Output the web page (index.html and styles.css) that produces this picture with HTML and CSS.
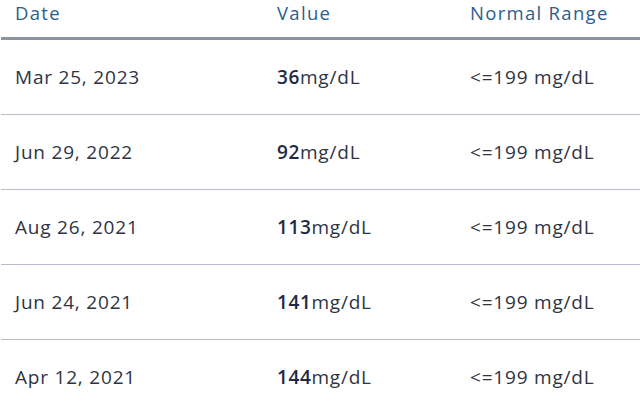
FILE: index.html
```html
<!DOCTYPE html>
<html>
<head>
<meta charset="utf-8">
<link rel="stylesheet" href="styles.css">
</head>
<body>
<div class="table">
  <div class="row head">
    <div class="cell">Date</div>
    <div class="cell">Value</div>
    <div class="cell">Normal Range</div>
  </div>
  <div class="row">
    <div class="cell">Mar 25, 2023</div>
    <div class="cell"><b class="num">36</b>mg/dL</div>
    <div class="cell">&lt;=199 mg/dL</div>
  </div>
  <div class="row">
    <div class="cell">Jun 29, 2022</div>
    <div class="cell"><b class="num">92</b>mg/dL</div>
    <div class="cell">&lt;=199 mg/dL</div>
  </div>
  <div class="row">
    <div class="cell">Aug 26, 2021</div>
    <div class="cell"><b class="num">113</b>mg/dL</div>
    <div class="cell">&lt;=199 mg/dL</div>
  </div>
  <div class="row">
    <div class="cell">Jun 24, 2021</div>
    <div class="cell"><b class="num">141</b>mg/dL</div>
    <div class="cell">&lt;=199 mg/dL</div>
  </div>
  <div class="row">
    <div class="cell">Apr 12, 2021</div>
    <div class="cell"><b class="num">144</b>mg/dL</div>
    <div class="cell">&lt;=199 mg/dL</div>
  </div>
</div>
</body>
</html>
```
FILE: styles.css
```css
html, body {
  margin: 0;
  padding: 0;
  background: #ffffff;
}
body {
  font-family: "Open Sans", "Liberation Sans", sans-serif;
  color: #2e3444;
  overflow: hidden;
}
.table {
  margin-left: 1px;
}
.row {
  display: grid;
  grid-template-columns: 262px 193px 1fr;
  padding-left: 14px;
  align-items: center;
  height: 74px;
  border-bottom: 1px solid #b9bdca;
  font-size: 19px;
  letter-spacing: 0.8px;
}
.row.head {
  height: 37px;
  align-items: start;
  border-bottom: 3px solid #8c939f;
  color: #2c5d8f;
  font-size: 18.5px;
  letter-spacing: 1.3px;
}
.row.head .cell {
  margin-top: 0;
}
.num {
  font-weight: 600;
  color: #1f2a44;
  letter-spacing: 0.6px;
}
```
